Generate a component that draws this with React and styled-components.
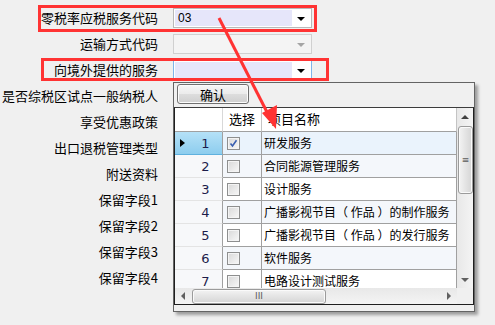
import React from 'react'
import styled, { createGlobalStyle } from 'styled-components'

const GlobalStyle = createGlobalStyle`
  html, body { margin: 0; padding: 0; background: #f0f0f0; }
  body { font-family: "Noto Sans CJK SC", "Noto Sans", sans-serif; color: #000; }
`;

const Page = styled.div`
  position: relative;
  width: 495px;
  height: 325px;
  overflow: hidden;
  background: #f0f0f0;
`;

const Form = styled.div`
  display: grid;
  grid-template-columns: 158px 139px;
  column-gap: 15px;
  grid-auto-rows: 26px;
  align-items: center;
  padding-top: 5px;
`;

const Label = styled.div`
  text-align: right;
  font-size: 13px;
  line-height: 26px;
  white-space: nowrap;
`;

const Combo = styled.div`
  box-sizing: border-box;
  height: 20px;
  display: flex;
  padding: 1px;
  border: 1px solid ${p => (p.$focus ? '#7eb4ea' : p.$disabled ? '#d0d0d0' : '#b9b9b9')};
  background: ${p => (p.$disabled ? '#f4f4f4' : '#fff')};
`;

const ComboText = styled.div`
  width: 117px;
  background: ${p => (p.$disabled ? '#f4f4f4' : '#e6e6fa')};
  font-family: "Liberation Sans", sans-serif;
  font-size: 12px;
  line-height: 16px;
  padding-left: 3px;
  box-sizing: border-box;
`;

const ComboArrow = styled.div`
  flex: 1;
  display: flex;
  align-items: center;
  justify-content: center;
  &::after {
    content: '';
    border-left: 4px solid transparent;
    border-right: 4px solid transparent;
    border-top: 4px solid ${p => (p.$disabled ? '#a5a5a5' : '#000')};
    margin-top: 1px;
  }
`;

const Mark = styled.div`
  position: absolute;
  box-sizing: border-box;
  border: 3px solid #f33;
  pointer-events: none;
`;

const Popup = styled.div`
  position: absolute;
  left: 173px;
  top: 82px;
  width: 302px;
  height: 230px;
  box-sizing: border-box;
  border: 1px solid #646464;
  background: #f0f0f0;
  box-shadow: 3px 3px 3px rgba(0, 0, 0, 0.35);
  display: flex;
  flex-direction: column;
  padding-top: 1px;
`;

const OkButton = styled.button`
  all: unset;
  box-sizing: border-box;
  width: 72px;
  height: 20px;
  margin-left: 3px;
  border: 1px solid #707070;
  border-radius: 3px;
  background: linear-gradient(#f6f6f6, #ebebeb 50%, #dddddd 51%, #cfcfcf);
  box-shadow: inset 0 0 0 1px #fcfcfc;
  font-size: 13px;
  line-height: 17px;
  text-align: center;
`;

const Grid = styled.div`
  margin-top: 3px;
  height: 198px;
  box-sizing: border-box;
  border: 1px solid #1f1f1f;
  border-top-color: #3c3c3c;
  background: #fff;
  display: flex;
  flex-direction: column;
`;

const GridBody = styled.div`
  display: flex;
  height: 180px;
`;

const Table = styled.div`
  width: 282px;
  overflow: hidden;
  display: grid;
  grid-template-columns: 48px 39px 195px;
  grid-template-rows: 24px;
  grid-auto-rows: 23px;
  align-content: start;
`;

const HeadCell = styled.div`
  box-sizing: border-box;
  background: #fff;
  border-bottom: 1px solid #a0a0a0;
  border-right: 1px solid ${p => (p.$corner ? '#d8d8d8' : '#c4c4c4')};
  font-size: 13px;
  line-height: 22px;
  padding-left: 6px;
  white-space: nowrap;
  overflow: hidden;
`;

const RowHead = styled.div`
  box-sizing: border-box;
  position: relative;
  border-right: 1px solid #a0a0a0;
  border-bottom: 1px solid ${p => (p.$active ? '#5fb1de' : '#e4e4e4')};
  background: ${p => (p.$active ? 'linear-gradient(#b5e1f7, #8dcdee)' : '#f7f8fa')};
  font-family: "DejaVu Sans", sans-serif;
  font-size: 13px;
  color: #1c1c4a;
  line-height: 23px;
  text-align: center;
  padding-left: 14px;
`;

const Pointer = styled.span`
  position: absolute;
  left: 5px;
  top: 7px;
  border-top: 4px solid transparent;
  border-bottom: 4px solid transparent;
  border-left: 5px solid #000;
`;

const Cell = styled.div`
  box-sizing: border-box;
  border-right: 1px solid #a0a0a0;
  border-bottom: 1px solid #a0a0a0;
  background: ${p => (p.$active ? '#eaf3fc' : p.$alt ? '#f4f7fb' : '#fff')};
  font-size: 12px;
  line-height: 22px;
  padding-left: 2px;
  white-space: nowrap;
  overflow: hidden;
  display: flex;
  align-items: center;
`;

const Check = styled.span`
  box-sizing: border-box;
  width: 13px;
  height: 13px;
  margin-left: 2px;
  border: 1px solid #8e8f8f;
  background: linear-gradient(135deg, #d8d8d8, #f8f8f8);
  box-shadow: inset 0 0 0 1px #f4f4f4;
  display: flex;
  align-items: center;
  justify-content: center;
`;

const VScroll = styled.div`
  width: 16px;
  box-sizing: border-box;
  background: linear-gradient(to right, #e8e8e8, #f4f4f4);
  display: flex;
  flex-direction: column;
`;

const HScrollRow = styled.div`
  display: flex;
  height: 16px;
`;

const HScroll = styled.div`
  width: 282px;
  background: linear-gradient(#e8e8e8, #f4f4f4);
  display: flex;
  align-items: center;
`;

const Corner = styled.div`
  flex: 1;
  background: #f0f0f0;
`;

const ScrollBtn = styled.div`
  width: 16px;
  height: ${p => (p.$v ? '17px' : '16px')};
  display: flex;
  align-items: center;
  justify-content: center;
  &::after {
    content: '';
    ${p => p.$dir === 'up' && `border-left:4px solid transparent;border-right:4px solid transparent;border-bottom:4px solid #404040;`}
    ${p => p.$dir === 'down' && `border-left:4px solid transparent;border-right:4px solid transparent;border-top:4px solid #606060;`}
    ${p => p.$dir === 'left' && `border-top:4px solid transparent;border-bottom:4px solid transparent;border-right:4px solid #606060;`}
    ${p => p.$dir === 'right' && `border-top:4px solid transparent;border-bottom:4px solid transparent;border-left:4px solid #606060;`}
  }
`;

const Thumb = styled.div`
  box-sizing: border-box;
  border: 1px solid #9b9b9b;
  border-radius: 3px;
  box-shadow: inset 0 0 0 1px #fafafa;
  display: flex;
  align-items: center;
  justify-content: center;
  color: #5a5a5a;
  font-family: "DejaVu Sans", sans-serif;
  font-size: 9px;
  line-height: 1;
  ${p =>
    p.$v
      ? `width:15px;height:68px;margin:1px 0 0 1px;background:linear-gradient(to right,#f3f3f3,#e4e4e4 50%,#d5d5d5);`
      : `width:134px;height:15px;margin-left:1px;background:linear-gradient(#f3f3f3,#e4e4e4 50%,#d5d5d5);`}
`;

const Spacer = styled.div`
  flex: 1;
`;

const Overlay = styled.svg`
  position: absolute;
  left: 0;
  top: 0;
  pointer-events: none;
`;

const fields = [
  '零税率应税服务代码',
  '运输方式代码',
  '向境外提供的服务',
  '是否综税区试点一般纳税人',
  '享受优惠政策',
  '出口退税管理类型',
  '附送资料',
  '保留字段1',
  '保留字段2',
  '保留字段3',
  '保留字段4',
];

const services = [
  '研发服务',
  '合同能源管理服务',
  '设计服务',
  '广播影视节目（ 作品 ）的制作服务',
  '广播影视节目（ 作品 ）的发行服务',
  '软件服务',
  '电路设计测试服务',
];

function CheckMark() {
  return (
    <svg width="9" height="9" viewBox="0 0 9 9">
      <path d="M1.5 4.5 L3.5 7 L7.5 1.2" fill="none" stroke="#3a5fb0" strokeWidth="1.6" />
    </svg>
  );
}

export default function App() {
  return (
    <Page>
      <GlobalStyle />
      <Form>
        {fields.map((f, i) => (
          <React.Fragment key={f}>
            <Label>{f}</Label>
            <Combo $disabled={i === 1} $focus={i === 2}>
              <ComboText $disabled={i === 1}>{i === 0 ? '03' : ''}</ComboText>
              <ComboArrow $disabled={i === 1} />
            </Combo>
          </React.Fragment>
        ))}
      </Form>

      <Mark style={{ left: 38, top: 5, width: 279, height: 27 }} />
      <Mark style={{ left: 41, top: 58, width: 288, height: 23 }} />

      <Popup>
        <OkButton>确认</OkButton>
        <Grid>
          <GridBody>
            <Table>
              <HeadCell $corner />
              <HeadCell>选择</HeadCell>
              <HeadCell>项目名称</HeadCell>
              {services.map((s, i) => (
                <React.Fragment key={s}>
                  <RowHead $active={i === 0}>
                    {i === 0 && <Pointer />}
                    {i + 1}
                  </RowHead>
                  <Cell $active={i === 0} $alt={i % 2 === 1}>
                    <Check>{i === 0 && <CheckMark />}</Check>
                  </Cell>
                  <Cell $active={i === 0} $alt={i % 2 === 1}>{s}</Cell>
                </React.Fragment>
              ))}
            </Table>
            <VScroll>
              <ScrollBtn $v $dir="up" />
              <Thumb $v>≡</Thumb>
              <Spacer />
              <ScrollBtn $v $dir="down" />
            </VScroll>
          </GridBody>
          <HScrollRow>
            <HScroll>
              <ScrollBtn $dir="left" />
              <Thumb>III</Thumb>
              <Spacer />
              <ScrollBtn $dir="right" />
            </HScroll>
            <Corner />
          </HScrollRow>
        </Grid>
      </Popup>

      <Overlay width="495" height="325">
        <line x1="219" y1="18" x2="270" y2="118" stroke="#f33" strokeWidth="3" />
        <polygon points="276,129 262,113 277,105" fill="#f33" />
      </Overlay>
    </Page>
  );
}
